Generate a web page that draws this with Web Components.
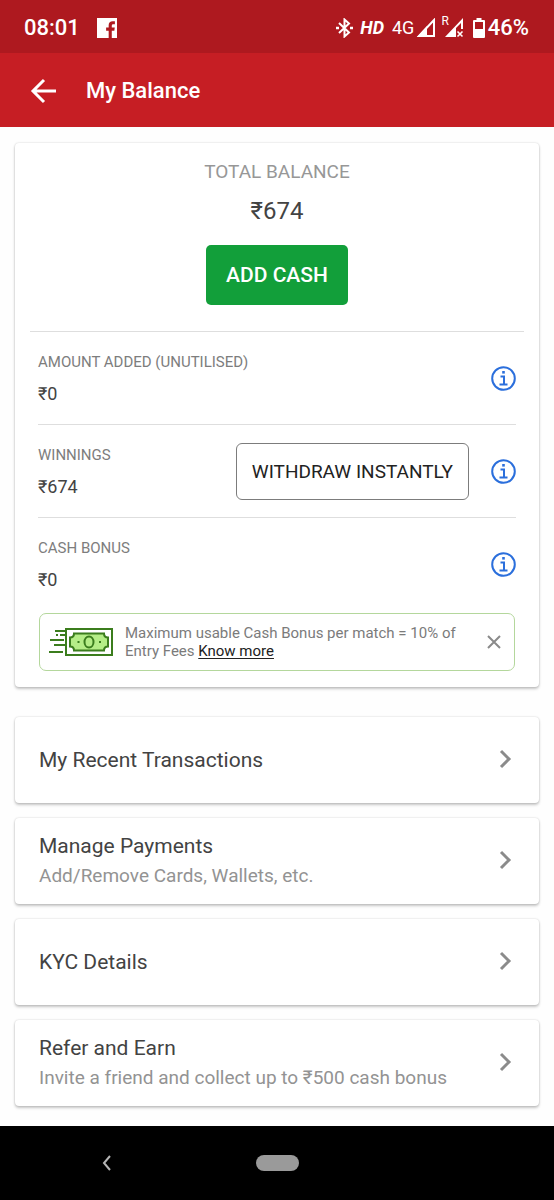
<!DOCTYPE html>
<html lang="en">
<head>
<meta charset="utf-8">
<meta name="viewport" content="width=device-width, initial-scale=1">
<title>My Balance</title>
<style>
  body { margin: 0; background: #fefefe; font-family: Roboto, "Noto Sans", sans-serif; color: #434343; }
</style>
</head>
<body>
<balance-page></balance-page>

<script>
const define = (name, html) => {
  const template = document.createElement('template');
  template.innerHTML = html;
  customElements.define(name, class extends HTMLElement {
    constructor() {
      super();
      this.attachShadow({ mode: 'open' }).append(template.content.cloneNode(true));
    }
  });
};

define('status-bar', `
<style>
  :host { display: flex; align-items: center; justify-content: space-between; height: 53px; padding: 2px 25px 0 24px; box-sizing: border-box; background: #ae191f; color: #fff; }
  .group { display: flex; align-items: center; }
  .time { font-size: 22px; font-weight: 500; margin-right: 17px; }
  .hd { font-size: 18px; font-weight: 700; font-style: italic; margin: 0 8px 0 7px; }
  .net { font-size: 18px; margin-right: 2px; }
  .roam { font-size: 12px; align-self: flex-start; line-height: 12px; margin-left: 5px; }
  .sim { margin-left: -5px; }
  .battery { margin: 0 3px 0 9px; }
  .level { font-size: 22px; font-weight: 500; }
  svg { display: block; }
</style>
<div class="group">
  <span class="time">08:01</span>
  <svg width="20" height="20" viewBox="1 1 18 18" aria-label="Facebook"><path fill="#fff" d="M1 1h18v18h-4.700v-6.600h2.300l.4-2.800h-2.700V8c0-.9.300-1.400 1.400-1.400h1.400V4c-.4 0-1.200-.1-2-.1-2.200 0-3.600 1.300-3.600 3.700v2H9.200v2.800h2.300V19H1z"/></svg>
</div>
<div class="group">
  <svg width="18" height="20" viewBox="0 0 18 20" fill="none" stroke="#fff" stroke-width="2"><path d="M4 5l10 9.500-4.500 4V1.500l4.500 4L4 15"/><path d="M1 10h3M15 10h3" stroke-width="2.400"/></svg>
  <span class="hd">HD</span>
  <span class="net">4G</span>
  <svg width="20" height="20" viewBox="0 0 20 20"><path d="M3 18L18 2v16z" fill="none" stroke="#fff" stroke-width="2"/><path d="M1 19L11 8v11z" fill="#fff"/></svg>
  <span class="roam">R</span>
  <svg class="sim" width="20" height="20" viewBox="0 0 20 20"><path d="M1 19L19 0v11h-2V5l-5 5v9z" fill="#fff"/><path d="M13.500 13.500l5 5M18.500 13.500l-5 5" stroke="#fff" stroke-width="1.600"/></svg>
  <svg class="battery" width="12" height="20" viewBox="0 0 12 20"><path fill="#fff" fill-rule="evenodd" d="M3.500 0h5v2H11q1 0 1 1v16q0 1-1 1H1q-1 0-1-1V3q0-1 1-1h2.500zM2 4v7h8V4z"/></svg>
  <span class="level">46%</span>
</div>`);

define('app-bar', `
<style>
  :host { display: flex; align-items: center; gap: 30px; height: 74px; padding: 2px 30px 0; box-sizing: border-box; background: #c61e24; color: #fff; }
  button { padding: 0; border: 0; background: none; cursor: pointer; }
  svg { display: block; }
  h1 { margin: 0; font-size: 22px; line-height: 28px; font-weight: 500; }
</style>
<button aria-label="Back"><svg width="26" height="26" viewBox="0 0 26 26" fill="none" stroke="#fff" stroke-width="3"><path d="M26 13H3M14 2L3 13l11 11"/></svg></button>
<h1><slot></slot></h1>`);

define('total-balance', `
<style>
  :host { display: flex; flex-direction: column; align-items: center; padding: 15px 0 26px; margin: 0 15px; border-bottom: 1px solid #dedede; }
  .label { font-size: 19px; line-height: 28px; color: #979797; }
  .amount { font-size: 24px; line-height: 32px; margin: 9px 0 18px; }
  button { font: 500 21px/28px Roboto, sans-serif; padding: 16px 20px; border: 0; border-radius: 5px; background: #129f3a; color: #fff; cursor: pointer; }
</style>
<span class="label">TOTAL BALANCE</span>
<span class="amount"><slot></slot></span>
<button>ADD CASH</button>`);

define('balance-row', `
<style>
  :host { display: flex; align-items: center; height: 92px; margin: 0 23px; border-bottom: 1px solid #dedede; }
  :host(:last-of-type) { border-bottom-color: transparent; }
  .text { flex: 1; display: grid; gap: 8px; }
  .label { font-size: 15px; line-height: 24px; color: #7d7d7d; }
  .value { font-size: 18px; line-height: 24px; }
  .info { margin-left: 22px; padding: 0; border: 0; background: none; cursor: pointer; }
  svg { display: block; }
</style>
<div class="text"><span class="label"><slot name="label"></slot></span><span class="value"><slot></slot></span></div>
<slot name="action"></slot>
<button class="info" aria-label="More information"><svg width="25" height="25" viewBox="0 0 25 25" fill="none" stroke="#2b6fdc" stroke-width="2"><circle cx="12.500" cy="12.500" r="11.300"/><path d="M9.500 10.500h3.500v8M8.500 18.500h8"/><path d="M12.500 5v2.600" stroke-width="2.600"/></svg></button>`);

define('outline-button', `
<style>
  :host { display: block; }
  button { display: block; font: 19px/24px Roboto, sans-serif; padding: 16px 15px 15px; border: 1px solid #7c7c7c; border-radius: 6px; background: #fff; color: #222; cursor: pointer; }
</style>
<button><slot></slot></button>`);

define('bonus-note', `
<style>
  :host { display: flex; align-items: center; margin: 2px 24px 16px; padding: 10px 13px 10px 9px; border: 1px solid #b4d79c; border-radius: 7px; }
  svg { display: block; flex: none; }
  p { flex: 1; margin: 0 12px; font-size: 15px; line-height: 18px; color: #7b7b7b; }
  a { color: #222; text-underline-offset: 2px; }
  button { padding: 0; border: 0; background: none; cursor: pointer; }
</style>
<svg width="64" height="30" viewBox="0 0 64 30" fill="none" stroke="#3b7d1d" stroke-width="2">
  <path d="M6 4h12M7 8h2M11 8h7M1 13h14M5 18h12M0 25h14"/>
  <rect x="17" y="2" width="46" height="26" fill="#fff"/>
  <path d="M25 6.500h30c0 2.500 1.500 4 4 4v9c-2.500 0-4 1.500-4 4H25c0-2.500-1.500-4-4-4v-9c2.500 0 4-1.500 4-4z" fill="#b5ed87"/>
  <ellipse cx="40" cy="15" rx="4.500" ry="5.500"/><path d="M28.500 15h2M50 15h2"/>
</svg>
<p>Maximum usable Cash Bonus per match = 10% of Entry Fees <a href="#bonus">Know more</a></p>
<button aria-label="Dismiss"><svg width="14" height="14" viewBox="0 0 14 14" stroke="#8a8a8a" stroke-width="2"><path d="M1 1l12 12M13 1L1 13"/></svg></button>`);

define('surface-card', `
<style>
  :host { display: flow-root; border-radius: 4px; background: #fff; box-shadow: 0 2px 3px rgba(0,0,0,.22), 0 0 2px rgba(0,0,0,.18); }
</style>
<slot></slot>`);

define('menu-link', `
<style>
  :host { display: block; }
  a { display: flex; align-items: center; min-height: 86px; box-sizing: border-box; padding: 0 27px 0 24px; color: inherit; text-decoration: none; }
  .text { flex: 1; display: grid; gap: 4px; }
  .title { font-size: 21px; line-height: 26px; }
  ::slotted([slot=detail]) { font-size: 19px; line-height: 26px; color: #939393; }
  svg { display: block; }
</style>
<a href="#open">
  <span class="text"><span class="title"><slot></slot></span><slot name="detail"></slot></span>
  <svg width="14" height="22" viewBox="0 0 14 22" fill="none" stroke="#8b8b8b" stroke-width="3"><path d="M3 2l8 8-8 8"/></svg>
</a>`);

define('nav-bar', `
<style>
  :host { display: grid; grid-template-columns: 1fr auto 1fr; align-items: center; height: 74px; background: #000; }
  button { padding: 0; border: 0; background: none; cursor: pointer; }
  .back { justify-self: center; margin-right: 42px; }
  .home { width: 43px; height: 16px; border-radius: 8px; background: #9a9a9a; }
  svg { display: block; }
</style>
<button class="back" aria-label="Back"><svg width="10" height="16" viewBox="0 0 10 16" fill="none" stroke="#b5b5b5" stroke-width="2"><path d="M8 1L2 8l6 7"/></svg></button>
<button class="home" aria-label="Home"></button>`);

define('balance-page', `
<style>
  :host { display: flex; flex-direction: column; min-height: 100vh; }
  main { flex: 1; padding: 16px 15px; }
  nav { display: grid; gap: 15px; margin-top: 30px; }
</style>
<status-bar></status-bar>
<app-bar>My Balance</app-bar>
<main>
  <surface-card>
    <total-balance>₹674</total-balance>
    <balance-row><span slot="label">AMOUNT ADDED (UNUTILISED)</span>₹0</balance-row>
    <balance-row><span slot="label">WINNINGS</span>₹674<outline-button slot="action">WITHDRAW INSTANTLY</outline-button></balance-row>
    <balance-row><span slot="label">CASH BONUS</span>₹0</balance-row>
    <bonus-note></bonus-note>
  </surface-card>
  <nav>
    <surface-card><menu-link>My Recent Transactions</menu-link></surface-card>
    <surface-card><menu-link>Manage Payments<span slot="detail">Add/Remove Cards, Wallets, etc.</span></menu-link></surface-card>
    <surface-card><menu-link>KYC Details</menu-link></surface-card>
    <surface-card><menu-link>Refer and Earn<span slot="detail">Invite a friend and collect up to ₹500 cash bonus</span></menu-link></surface-card>
  </nav>
</main>
<nav-bar></nav-bar>`);
</script>
</body>
</html>
